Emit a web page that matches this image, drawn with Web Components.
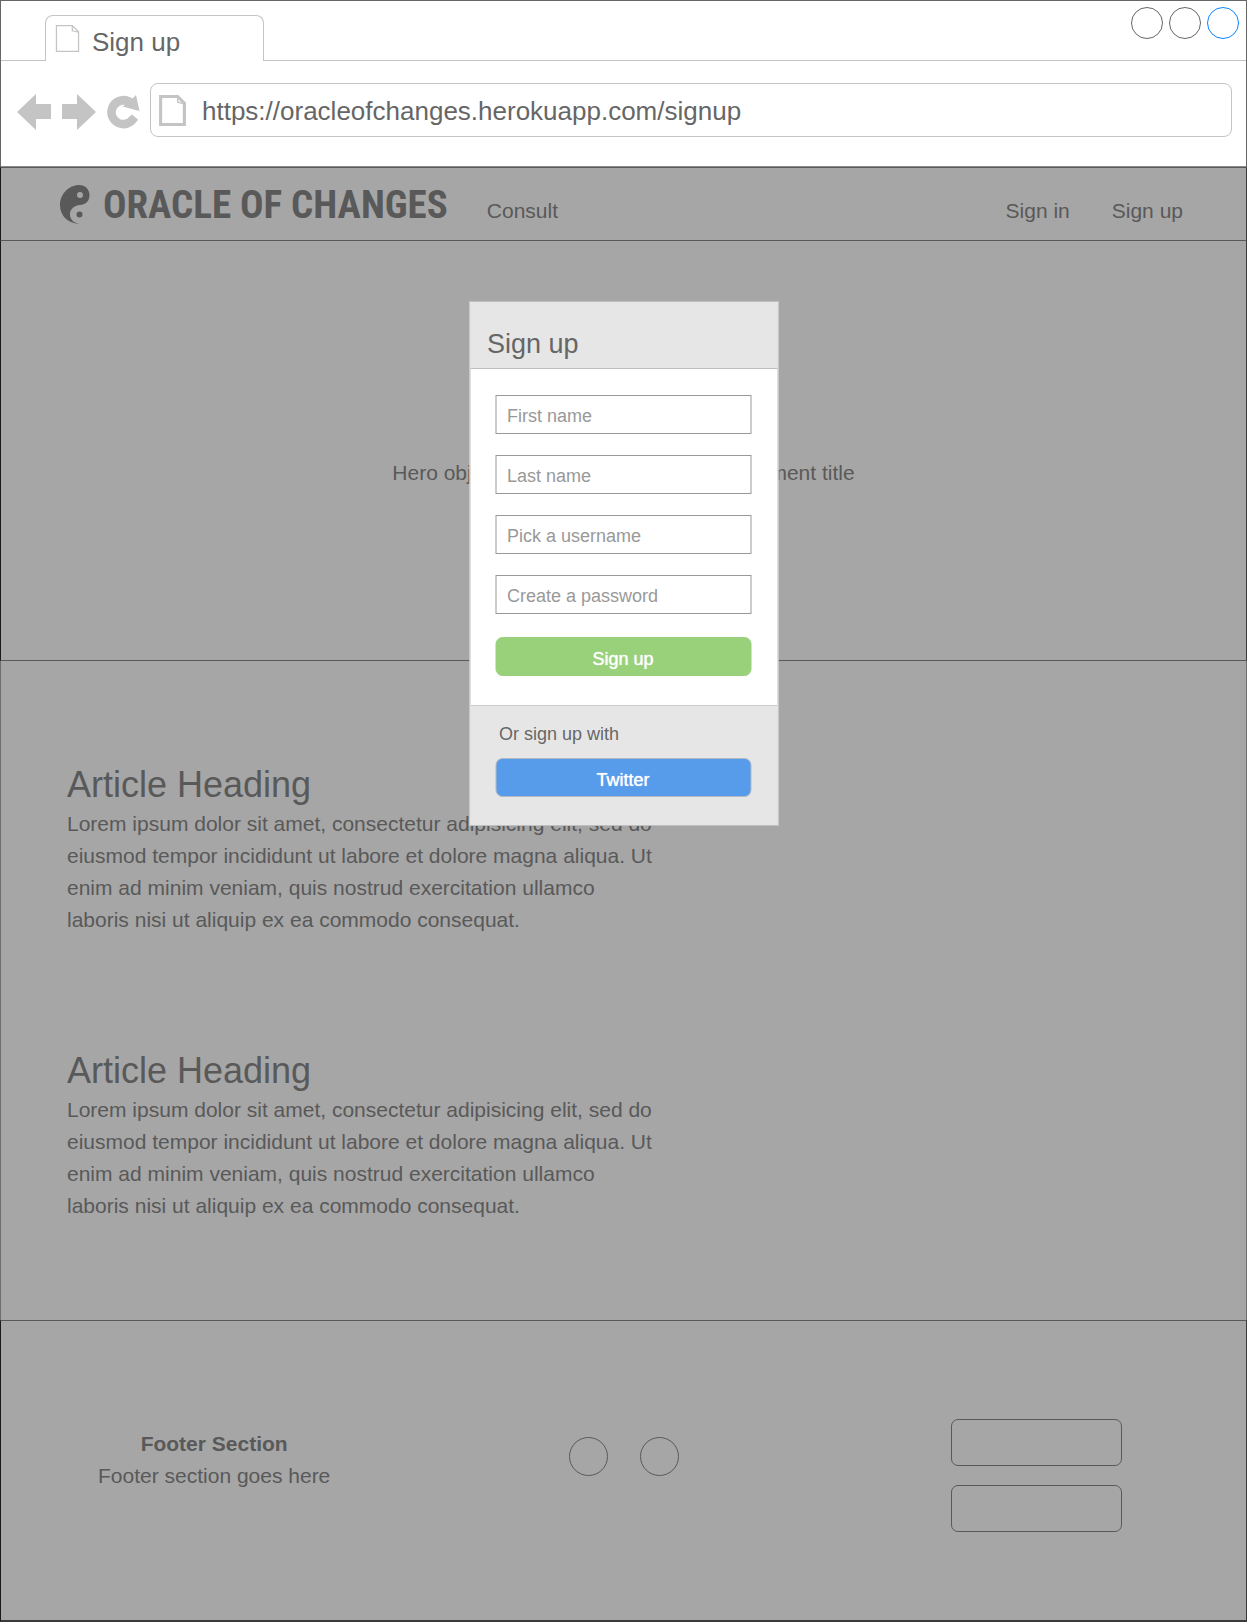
<!DOCTYPE html>
<html lang="en">
<head>
<meta charset="utf-8">
<title>Sign up</title>
<style>
html,body{margin:0;height:100%}
body{font:21px/32px "Liberation Sans",Arial,sans-serif;color:#595959;background:#a6a6a6}
</style>
</head>
<body>
<app-window></app-window>
<script>
const define = (name, html) => customElements.define(name, class extends HTMLElement {
  constructor() {
    super();
    this.attachShadow({mode: "open"}).innerHTML = "<style>*{box-sizing:border-box}</style>" + html;
  }
});

define("page-icon", `
<style>:host{display:block;color:#c4c4c4}svg{display:block;width:100%;height:100%}.sheet{stroke-width:var(--stroke,1.3px)}</style>
<svg viewBox="0 0 26 30" fill="none" stroke="currentColor" aria-hidden="true">
<path class="sheet" d="M1.500 1.500H18L24.500 8V28.500H1.500Z"/><path d="M18 1.500V7L25 8.500" stroke-width="1.3"/></svg>`);

define("browser-tabs", `
<style>
:host{display:flex;align-items:flex-end;height:60px;padding-top:14px}
.lead{width:44px;align-self:stretch;border-bottom:1px solid #c4c4c4}
.tab{display:flex;align-items:center;gap:12px;width:219px;height:46px;padding:6px 9px 0;border:1px solid #c4c4c4;border-bottom:0;border-radius:8px 8px 0 0;font-size:26px;line-height:32px;color:#666}
page-icon{width:25px;height:29px;margin-bottom:6px}
.rest{flex:1;align-self:stretch;border-bottom:1px solid #c4c4c4;display:flex;justify-content:flex-end;padding-right:7px}
.dots{display:flex;gap:6px;margin-top:-8px}
button{width:32px;height:32px;padding:0;border:1px solid #666;border-radius:50%;background:none}
button.on{border-color:#0887ff}
</style>
<div class="lead"></div>
<div class="tab"><page-icon></page-icon><span>Sign up</span></div>
<div class="rest"><div class="dots"><button aria-label="Minimise"></button><button aria-label="Maximise"></button><button class="on" aria-label="Close"></button></div></div>`);

define("browser-bar", `
<style>
:host{display:flex;align-items:center;height:106px;padding:0 14px 8px 16px;border-bottom:1px solid #8c8c8c}
button{padding:0;border:0;background:none;color:#c4c4c4;display:block}
svg{display:block}
.tools{display:flex;gap:11px;margin-right:10px;padding-top:4px}
label{flex:1;display:flex;align-items:center;gap:16px;height:54px;padding:2px 8px 0;border:1px solid #c4c4c4;border-radius:8px}
page-icon{width:27px;height:31px;--stroke:3px}
input{flex:1;min-width:0;border:0;padding:0;outline:0;background:none;font:26px/32px "Liberation Sans",Arial,sans-serif;color:#666}
</style>
<div class="tools">
<button aria-label="Back"><svg width="34" height="38" viewBox="0 0 34 38" fill="currentColor"><path d="M0 19L19 1V11H34V26H19V37Z"/></svg></button>
<button aria-label="Forward"><svg width="34" height="38" viewBox="0 0 34 38" fill="currentColor"><path d="M34 19L15 1V11H0V26H15V37Z"/></svg></button>
<button aria-label="Reload"><svg width="33" height="38" viewBox="0 0 33 38" fill="currentColor"><path d="M29 2L32.500 18L15.500 13.500L18 12A7.500 7.500 0 1 0 22.500 23.500L25 21.500L31 26.500A16.300 16.300 0 1 1 25.500 5.500Z"/></svg></button>
</div>
<label><page-icon></page-icon><input type="text" aria-label="Address" value="https://oracleofchanges.herokuapp.com/signup"></label>`);

define("site-header", `
<style>
:host{display:flex;align-items:center;height:74px;padding:0 63px 0 59px;border:1px solid #595959;border-left-color:#1a1a1a;border-right-color:#3a3a3c}
a{color:inherit;text-decoration:none}
.brand{display:flex;align-items:center;gap:13px;padding-top:2px;font:bold 39px/48px "Roboto Condensed","Liberation Sans Narrow",sans-serif}
.brand svg{display:block}
nav{display:flex;flex:1;gap:42px;padding:13px 0 0 39px}
.in{margin-left:auto}
</style>
<a class="brand" href="#"><svg width="30" height="40" viewBox="0 0 30 40" aria-hidden="true"><path fill="#595959" fill-rule="evenodd" d="M19 39C7 38 0 30 0 20C0 9 9 0 19 0C25 0 29.500 4 29.500 10C29.500 16 26 19.500 20 20C14 20.500 10 24 10 29.500C10 34 13 37.500 19 39ZM23 10A3 3 0 1 0 17 10A3 3 0 1 0 23 10Z"/><circle cx="19.500" cy="29.500" r="3" fill="#595959"/></svg><span>ORACLE OF CHANGES</span></a>
<nav><a href="#">Consult</a><a class="in" href="#">Sign in</a><a href="#">Sign up</a></nav>`);

define("hero-panel", `
<style>:host{display:flex;align-items:center;justify-content:center;height:420px;padding-top:44px;border:1px solid #595959;border-top:0;border-left-color:#1a1a1a;border-right-color:#3a3a3c}p{margin:0}</style>
<p>Hero object goes here with an announcement title</p>`);

define("article-block", `
<style>:host{display:block;width:594px;max-width:100%}h2{margin:0;font-size:36px;line-height:46px;font-weight:400}p{margin:0}</style>
<h2><slot name="heading"></slot></h2><p><slot></slot></p>`);

define("article-list", `
<style>:host{display:flex;flex-direction:column;gap:112px;padding:101px 66px 98px;border:1px solid #6e6e6e;border-width:0 1px}</style><slot></slot>`);

define("site-footer", `
<style>
:host{display:grid;grid-template-columns:1fr auto 1fr;align-items:start;flex:1;padding:98px 97px 86px;border:1px solid #595959;border-left-color:#1a1a1a;border-right-color:#3a3a3c;border-bottom:2px solid #3a3a3c}
.copy{justify-self:start;text-align:center;padding-top:9px}
p{margin:0}
.dots{display:flex;gap:32px;padding-top:18px}
.dots button{width:39px;height:39px;border-radius:50%}
.links{justify-self:end;display:flex;flex-direction:column;gap:19px;margin-right:27px}
button{display:block;padding:0;width:171px;height:47px;border:1px solid #595959;border-radius:7px;background:none}
</style>
<div class="copy"><p><strong>Footer Section</strong></p><p>Footer section goes here</p></div>
<div class="dots"><button aria-label="Social link one"></button><button aria-label="Social link two"></button></div>
<div class="links"><button aria-label="First action"></button><button aria-label="Second action"></button></div>`);

define("text-field", `
<style>
:host{display:block}
input{display:block;width:100%;height:39px;padding:3px 10px 0 11px;border:1px solid #999;border-radius:0;background:#fff;font:18px/24px "Liberation Sans",Arial,sans-serif;color:#666}
input::placeholder{color:#999;opacity:1}
</style><input>`);

define("action-button", `
<style>
:host{display:block}
button{display:block;width:100%;height:39px;padding:4px 0 0;border:1px solid var(--edge);border-radius:7px;background:var(--fill);color:#fff;font:18px/24px "Liberation Sans",Arial,sans-serif;text-shadow:0 0 1px #fff}
</style><button><slot></slot></button>`);

define("signup-dialog", `
<style>
:host{display:block;width:309px;border:1px solid #bfbfbf;background:#fff;color:#666}
header{height:67px;padding:26px 17px 0;background:#e6e6e6;border-bottom:1px solid #bfbfbf}
h1{margin:0;font-size:27px;line-height:32px;font-weight:400}
form{display:flex;flex-direction:column;gap:21px;padding:26px 26px 29px 25px}
footer{background:#e6e6e6;border-top:1px solid #ccc;padding:16px 26px 28px 25px}
p{margin:0 0 12px;padding-left:4px;font-size:18px;line-height:24px}
.go{--fill:#99d17b;--edge:#99d17b;margin-top:2px}
.tw{--fill:#569ceb;--edge:#b3b9c2}
</style>
<header><h1>Sign up</h1></header>
<form>
<text-field label="First name"></text-field><text-field label="Last name"></text-field><text-field label="Pick a username"></text-field><text-field label="Create a password" type="password"></text-field>
<action-button class="go">Sign up</action-button>
</form>
<footer><p>Or sign up with</p><action-button class="tw">Twitter</action-button></footer>`);

define("app-window", `
<style>
:host{display:flex;flex-direction:column;min-height:100vh;position:relative}
.chrome{background:#fff;border:1px solid #666;border-width:1px 1px 0}
signup-dialog{position:absolute;top:301px;left:50%;transform:translateX(-50%)}
</style>
<div class="chrome"><browser-tabs></browser-tabs><browser-bar></browser-bar></div>
<site-header></site-header>
<hero-panel></hero-panel>
<article-list>
<article-block><span slot="heading">Article Heading</span>Lorem ipsum dolor sit amet, consectetur adipisicing elit, sed do eiusmod tempor incididunt ut labore et dolore magna aliqua. Ut enim ad minim veniam, quis nostrud exercitation ullamco laboris nisi ut aliquip ex ea commodo consequat.</article-block>
<article-block><span slot="heading">Article Heading</span>Lorem ipsum dolor sit amet, consectetur adipisicing elit, sed do eiusmod tempor incididunt ut labore et dolore magna aliqua. Ut enim ad minim veniam, quis nostrud exercitation ullamco laboris nisi ut aliquip ex ea commodo consequat.</article-block>
</article-list>
<site-footer></site-footer>
<signup-dialog></signup-dialog>`);

for (const field of document.querySelector("app-window").shadowRoot.querySelector("signup-dialog").shadowRoot.querySelectorAll("text-field")) {
  const input = field.shadowRoot.querySelector("input");
  input.placeholder = field.getAttribute("label");
  input.setAttribute("aria-label", field.getAttribute("label"));
  input.type = field.getAttribute("type") || "text";
}
</script>
</body>
</html>
